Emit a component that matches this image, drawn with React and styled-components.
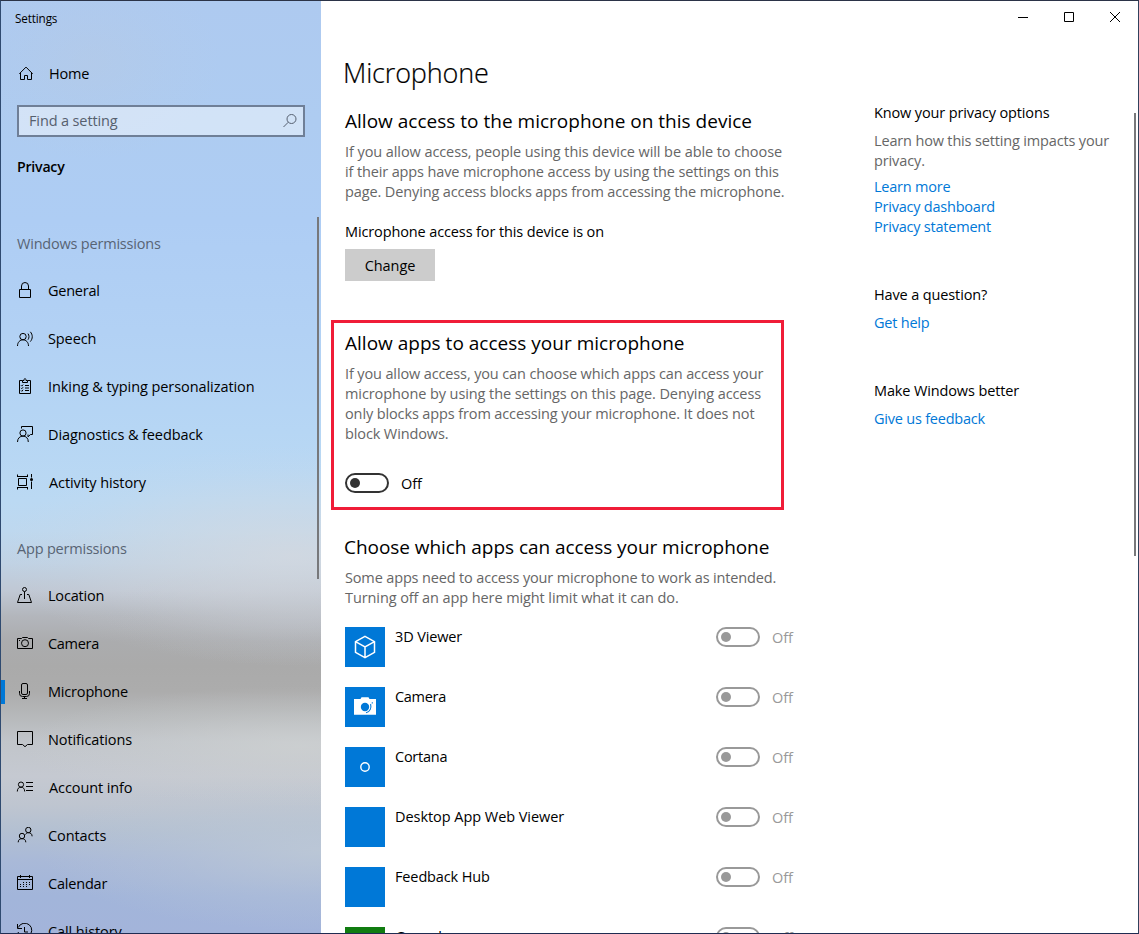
import React from "react";
import styled, { createGlobalStyle, css } from "styled-components";

const GlobalStyle = createGlobalStyle`
  * { box-sizing: border-box; }
  html, body { margin: 0; padding: 0; overflow: hidden; }
  body { font-family: "Open Sans", "Noto Sans", sans-serif; font-size: 14.5px; line-height: 20px; letter-spacing: -0.13px; color: #000; background: #fff; }
  h1, h2, h3, p { margin: 0; font-weight: 400; }
  h3 { font-size: 14.5px; }
`;

const Window = styled.div`
  position: relative;
  display: flex;
  width: 1139px;
  height: 934px;
  overflow: hidden;
  border: 1px solid;
  border-color: #2b3347 #30415c #1f2c52 #2f4a70;
  background: #fff;
`;

const Sidebar = styled.aside`
  position: relative;
  flex: 0 0 320px;
  height: 932px;
  overflow: hidden;
  background:
    radial-gradient(ellipse 130px 100px at 90px 60px, rgba(184, 201, 224, 0.4), rgba(184, 201, 224, 0.12) 60%, rgba(184, 201, 224, 0)),
    radial-gradient(ellipse 290px 110px at 290px 555px, rgba(213, 217, 223, 0.75), rgba(213, 217, 222, 0.35) 50%, rgba(213, 217, 222, 0.1) 78%, rgba(213, 217, 222, 0)),
    radial-gradient(ellipse 220px 55px at 320px 612px, rgba(184, 189, 199, 0.45), rgba(184, 189, 199, 0.15) 60%, rgba(184, 189, 199, 0)),
    radial-gradient(ellipse 280px 60px at 300px 745px, rgba(207, 210, 210, 0.7), rgba(207, 210, 210, 0.22) 60%, rgba(207, 210, 210, 0)),
    radial-gradient(ellipse 280px 80px at 320px 850px, rgba(190, 201, 214, 0.8), rgba(190, 201, 214, 0.3) 55%, rgba(190, 201, 214, 0)),
    linear-gradient(180deg,
      #aecaf0 0px, #aeccf1 120px, #aecdf4 220px, #b2d1f4 330px, #b6d6f4 430px,
      #bbd9f3 500px, #bed8ef 530px, #c0d2e4 562px, #c0c8d4 590px, #b3b6bc 615px,
      #abacae 640px, #aaaaaa 665px, #acacac 690px, #b6b8ba 715px, #c1c5ca 740px,
      #c5c9d1 775px, #bec5d0 805px, #b3c0d2 830px, #a9b9d8 860px, #a2b5da 895px, #a3b4da 932px);
`;

const Caption = styled.div`
  height: 32px;
  padding: 7px 0 0 14px;
  font-size: 11.7px;
`;

const NavRow = styled.a`
  position: relative;
  display: flex;
  align-items: center;
  height: 48px;
  padding-left: 15px;
  gap: ${(p) => (p.$wide ? 15 : 14)}px;
  letter-spacing: ${(p) => p.$track || "-0.1px"};
  ${(p) => p.$home && css`margin-top: 17px;`}
  ${(p) => p.$active && css`
    &::before {
      content: "";
      position: absolute;
      left: 0;
      top: 12px;
      width: 4px;
      height: 24px;
      background: #0078d7;
    }
  `}
`;

const Glyph = styled.svg`
  flex: none;
  display: block;
  width: 18px;
  height: 18px;
  fill: none;
  stroke: #000;
  stroke-width: 1;
`;

const SearchBox = styled.div`
  display: flex;
  align-items: center;
  justify-content: space-between;
  width: 288px;
  height: 32px;
  margin: 7px 0 0 16px;
  padding: 0 5px 0 10px;
  border: 2px solid #6f7f97;
  background: rgba(255, 255, 255, 0.45);
  color: #56606e;
`;

const SearchGlyph = styled.svg`
  width: 16px;
  height: 16px;
  fill: none;
  stroke: #566070;
`;

const Category = styled.h2`
  height: 48px;
  margin-top: 6px;
  padding-left: 16px;
  font-size: 14.2px;
  font-weight: 600;
  line-height: 48px;
  letter-spacing: -0.25px;
`;

const GroupLabel = styled.h3`
  height: 47px;
  margin-top: ${(p) => p.$gap}px;
  padding-left: 16px;
  line-height: 47px;
  letter-spacing: -0.2px;
  color: #586474;
`;

const ScrollThumb = styled.div`
  position: absolute;
  top: ${(p) => p.$top}px;
  right: ${(p) => p.$right}px;
  width: 2px;
  height: ${(p) => p.$length}px;
  background: #77787b;
`;

const Page = styled.main`
  flex: 1;
  min-width: 0;
  height: 932px;
  overflow: hidden;
`;

const WindowControls = styled.div`
  display: flex;
  justify-content: flex-end;
  height: 32px;
`;

const ControlButton = styled.button`
  display: flex;
  align-items: center;
  justify-content: center;
  width: 46px;
  height: 32px;
  padding: 0;
  border: 0;
  background: transparent;
`;

const ControlGlyph = styled.svg`
  width: 12px;
  height: 12px;
  fill: none;
  stroke: #000;
`;

const Columns = styled.div`
  display: grid;
  grid-template-columns: 453px 250px;
  column-gap: 90px;
  padding: 17px 0 0 10px;
`;

const Content = styled.div`
  min-width: 0;
`;

const PageTitle = styled.h1`
  height: 48px;
  padding-left: 12px;
  font-size: 27px;
  font-weight: 300;
  line-height: 46px;
  letter-spacing: -0.15px;
  -webkit-text-stroke: 0.2px #000;
`;

const Section = styled.section`
  margin-top: ${(p) => p.$gap || 0}px;
  padding-left: 14px;
`;

const Highlight = styled.section`
  height: 190px;
  margin-top: 39px;
  padding: 6px 0 0 11px;
  border: 3px solid #f01c38;
`;

const SectionTitle = styled.h2`
  height: 28px;
  margin-bottom: 7px;
  margin-left: ${(p) => (p.$outdent ? -1 : 0)}px;
  font-size: 19px;
  line-height: 28px;
  letter-spacing: ${(p) => (p.$outdent ? "-0.05px" : "0.01px")};
  white-space: nowrap;
`;

const Line = styled.span`
  display: block;
  white-space: nowrap;
  letter-spacing: ${(p) => p.$track || "-0.12px"};
`;

const Description = styled.p`
  color: #666;
`;

const Status = styled.p`
  margin-top: 20px;
  letter-spacing: -0.12px;
`;

const Button = styled.button`
  display: block;
  width: 90px;
  height: 32px;
  margin-top: 7px;
  padding: 2px 0 0;
  border: 0;
  background: #ccc;
  font: inherit;
  letter-spacing: -0.05px;
  color: #000;
`;

const ToggleRow = styled.div`
  display: flex;
  align-items: center;
  gap: 12px;
  height: 20px;
  margin-top: ${(p) => p.$gap || 0}px;
  color: ${(p) => (p.$muted ? "#999" : "#000")};
`;

const ToggleLabel = styled.span`
  padding-top: 2px;
`;

const Switch = styled.span`
  display: flex;
  align-items: center;
  width: 44px;
  height: 20px;
  padding-left: 3px;
  border: 2px solid ${(p) => (p.$muted ? "#999" : "#333")};
  border-radius: 10px;

  &::before {
    content: "";
    width: 10px;
    height: 10px;
    border-radius: 50%;
    background: ${(p) => (p.$muted ? "#999" : "#333")};
  }
`;

const AppList = styled.div`
  margin-top: 19px;
`;

const AppRow = styled.div`
  display: grid;
  grid-template-columns: 40px 311px auto;
  column-gap: 10px;
  height: 60px;
`;

const AppName = styled.span`
  letter-spacing: ${(p) => p.$track || "-0.13px"};
`;

const Tile = styled.svg`
  display: block;
  width: 40px;
  height: 40px;
  background: ${(p) => p.$color};
  fill: none;
  stroke: #fff;
`;

const Related = styled.div`
  display: flex;
  flex-direction: column;
  padding-top: 53px;
`;

const RelatedGroup = styled.section`
  margin-bottom: 48px;
`;

const RelatedTitle = styled.h3`
  margin-bottom: 8px;
  white-space: nowrap;
`;

const Links = styled.div`
  display: flex;
  flex-direction: column;
  margin-top: ${(p) => p.$gap || 0}px;
  letter-spacing: -0.22px;
  color: #0078d7;
`;

const icons = {
  home: <path d="M3.3 8.8 10 2.1l6.7 6.7M4.5 7.8v6.7h4v-4h3v4h4V7.8" />,
  lock: <path d="M3.5 7.5h11v8h-11zM5.5 7.5V4a3.5 3.5 0 0 1 7 0v3.500" />,
  speech: (
    <>
      <circle cx="7" cy="6.6" r="3.2" />
      <path d="M1.500 16C1.500 12.200 4 9.800 7 9.800s5.500 2.400 5.500 6.200M12 3.600c1.300 1.800 1.300 4.300 0 6.100M14.300 1.800c2.600 2.900 2.600 6.900 0 9.800" />
    </>
  ),
  clipboard: (
    <>
      <path d="M6.500 2.500h-3v13h11v-13h-3M6.500 4.500v-2h1.500c0-2.600 2-2.600 2 0h1.500v2z" />
      <path d="M9 7.500h4M9 10h4M9 12.500h4M5 7.300l.8.800 1.300-1.500M5 9.900l.8.800 1.300-1.500M5 12.500l.8.800 1.300-1.500" />
    </>
  ),
  feedback: (
    <>
      <circle cx="7" cy="7" r="3.1" />
      <path d="M1.500 16c0-3.700 2.400-5.900 5.500-5.900s5.300 2.200 5.300 5.900M5.500 2.500v-2h11v8h-2l-2.500 2.300V8.500" />
    </>
  ),
  history: (
    <>
      <path d="M1 2.500h11M1.500.500v2M11.500.500v2M2.500 4.500h8v7h-8zM1 13.500h11M1.500 13.500v2M11.500 13.500v2M15.500 0v3.500M15.500 7.500V15" />
      <circle cx="15.500" cy="5.500" r="1.500" fill="#000" stroke="none" />
    </>
  ),
  location: (
    <>
      <circle cx="8.500" cy="2.500" r="2" />
      <path d="M8.500 4.500V12M6 7.500H4.200l-2.700 8h14l-2.700-8H11" />
    </>
  ),
  camera: (
    <>
      <path d="M1.500 3.500h4l1-1h5l1 1h4v10h-15z" />
      <circle cx="9" cy="8.200" r="3.500" />
      <path d="M3 5.500h1" />
    </>
  ),
  microphone: (
    <>
      <rect x="5.500" y="0.500" width="6" height="11" rx="1.500" />
      <path d="M3.500 8v2.500a3 3 0 0 0 3 3h4a3 3 0 0 0 3-3V8M8.500 13.500v2M6 15.500h5" />
    </>
  ),
  notification: <path d="M1.500.500h15v13h-5L9 15.700 6.500 13.500h-5z" />,
  account: (
    <>
      <circle cx="5" cy="5.600" r="2.600" />
      <path d="M1.300 12.500c0-2.800 1.500-4.300 3.700-4.300s3.700 1.500 3.700 4.300M10 3.500h7M10 7.500h7M10 11.500h7" />
    </>
  ),
  contacts: (
    <>
      <circle cx="12.300" cy="3" r="2.700" />
      <circle cx="6" cy="9" r="2.700" />
      <path d="M2.200 15.300c0-2.500 1.500-3.600 3.800-3.600s3.800 1.100 3.800 3.600M9.500 7.500c.6-1.200 1.500-1.800 2.800-1.800 2.300 0 3.800 1.200 3.800 3.600" />
    </>
  ),
  calendar: (
    <>
      <path d="M1.500 1.500h15v13h-15zM1.500 4.500h15M4.500 0v3M13.500 0v3" />
      <path d="M7 7.500h8M4 9.500h11M4 11.500h8" strokeDasharray="1 2" />
    </>
  ),
  callHistory: <path d="M2.300 4.500A7 7 0 1 1 2 9M1.500 1v4.500H6M8.500 4v5h3.500" />,
};

function Icon({ name }) {
  return <Glyph viewBox="0 0 18 18">{icons[name]}</Glyph>;
}

const windowsPermissions = [
  ["lock", "General", "-0.25px"],
  ["speech", "Speech"],
  ["clipboard", "Inking & typing personalization", "-0.07px"],
  ["feedback", "Diagnostics & feedback"],
  ["history", "Activity history"],
];

const appPermissions = [
  ["location", "Location", "-0.2px"],
  ["camera", "Camera", "-0.3px"],
  ["microphone", "Microphone", "-0.18px"],
  ["notification", "Notifications"],
  ["account", "Account info"],
  ["contacts", "Contacts"],
  ["calendar", "Calendar", "-0.2px"],
  ["callHistory", "Call history"],
];

const apps = [
  {
    name: "3D Viewer",
    art: <path d="M20 9.300l9.500 5.300v10.800L20 30.700l-9.500-5.300V14.600zM10.500 14.600l9.500 5.200 9.500-5.200M20 19.800v10.900" strokeWidth="1.500" />,
  },
  {
    name: "Camera",
    track: "-0.3px",
    art: (
      <>
        <path d="M9 12h6.500l1-1.700h7l1 1.700H31v15.700H9z" fill="#fff" stroke="none" />
        <circle cx="20" cy="20" r="4.200" fill="#0078d7" stroke="none" />
        <path d="M25.600 17c1 3.900-.6 7.600-4.600 8.800M27.300 15.300v1.200" stroke="#0078d7" strokeWidth="1.100" />
      </>
    ),
  },
  { name: "Cortana", track: "-0.25px", art: <circle cx="20" cy="20" r="4.200" strokeWidth="1.400" /> },
  { name: "Desktop App Web Viewer", track: "-0.05px" },
  { name: "Feedback Hub" },
  { name: "Game bar", color: "#107c10" },
];

function Toggle({ muted, gap }) {
  return (
    <ToggleRow $muted={muted} $gap={gap}>
      <Switch $muted={muted} />
      <ToggleLabel>Off</ToggleLabel>
    </ToggleRow>
  );
}

export default function App() {
  return (
    <>
      <GlobalStyle />
      <Window>
        <Sidebar>
          <Caption>Settings</Caption>
          <NavRow $home $wide $track="-0.2px">
            <Icon name="home" />
            Home
          </NavRow>
          <SearchBox>
            <span>Find a setting</span>
            <SearchGlyph viewBox="0 0 16 16">
              <circle cx="9.500" cy="6" r="4.500" />
              <path d="M6.300 9.200 1.500 14" />
            </SearchGlyph>
          </SearchBox>
          <Category>Privacy</Category>
          <GroupLabel $gap={29}>Windows permissions</GroupLabel>
          {windowsPermissions.map(([icon, label, track]) => (
            <NavRow key={label} $track={track} $wide={label.startsWith("A")}>
              <Icon name={icon} />
              {label}
            </NavRow>
          ))}
          <GroupLabel $gap={18}>App permissions</GroupLabel>
          {appPermissions.map(([icon, label, track]) => (
            <NavRow key={label} $track={track} $active={label === "Microphone"} $wide={label.startsWith("A")}>
              <Icon name={icon} />
              {label}
            </NavRow>
          ))}
          <ScrollThumb $top={216} $right={2} $length={362} />
        </Sidebar>
        <Page>
          <WindowControls>
            <ControlButton aria-label="Minimize">
              <ControlGlyph viewBox="0 0 12 12"><path d="M1 6.500h10" /></ControlGlyph>
            </ControlButton>
            <ControlButton aria-label="Maximize">
              <ControlGlyph viewBox="0 0 12 12"><path d="M1.500 1.500h9v9h-9z" /></ControlGlyph>
            </ControlButton>
            <ControlButton aria-label="Close">
              <ControlGlyph viewBox="0 0 12 12"><path d="m1 1 10 10M11 1 1 11" /></ControlGlyph>
            </ControlButton>
          </WindowControls>
          <Columns>
            <Content>
              <PageTitle>Microphone</PageTitle>
              <Section $gap={9}>
                <SectionTitle>Allow access to the microphone on this device</SectionTitle>
                <Description>
                  <Line $track="-0.08px">If you allow access, people using this device will be able to choose</Line>
                  <Line $track="-0.13px">if their apps have microphone access by using the settings on this</Line>
                  <Line>page. Denying access blocks apps from accessing the microphone.</Line>
                </Description>
                <Status>Microphone access for this device is on</Status>
                <Button>Change</Button>
              </Section>
              <Highlight>
                <SectionTitle>Allow apps to access your microphone</SectionTitle>
                <Description>
                  <Line $track="-0.13px">If you allow access, you can choose which apps can access your</Line>
                  <Line $track="-0.09px">microphone by using the settings on this page. Denying access</Line>
                  <Line>only blocks apps from accessing your microphone. It does not</Line>
                  <Line>block Windows.</Line>
                </Description>
                <Toggle gap={29} />
              </Highlight>
              <Section $gap={23}>
                <SectionTitle $outdent>Choose which apps can access your microphone</SectionTitle>
                <Description>
                  <Line $track="-0.15px">Some apps need to access your microphone to work as intended.</Line>
                  <Line $track="-0.09px">Turning off an app here might limit what it can do.</Line>
                </Description>
                <AppList>
                  {apps.map((app) => (
                    <AppRow key={app.name}>
                      <Tile viewBox="0 0 40 40" $color={app.color || "#0078d7"}>{app.art}</Tile>
                      <AppName $track={app.track}>{app.name}</AppName>
                      <Toggle muted />
                    </AppRow>
                  ))}
                </AppList>
              </Section>
            </Content>
            <Related>
              <RelatedGroup>
                <RelatedTitle>Know your privacy options</RelatedTitle>
                <Description>
                  <Line $track="-0.16px">Learn how this setting impacts your</Line>
                  <Line>privacy.</Line>
                </Description>
                <Links $gap={6}>
                  <a>Learn more</a>
                  <a>Privacy dashboard</a>
                  <a>Privacy statement</a>
                </Links>
              </RelatedGroup>
              <RelatedGroup>
                <RelatedTitle>Have a question?</RelatedTitle>
                <Links><a>Get help</a></Links>
              </RelatedGroup>
              <RelatedGroup>
                <RelatedTitle>Make Windows better</RelatedTitle>
                <Links><a>Give us feedback</a></Links>
              </RelatedGroup>
            </Related>
          </Columns>
        </Page>
        <ScrollThumb $top={112} $right={2} $length={443} />
      </Window>
    </>
  );
}
